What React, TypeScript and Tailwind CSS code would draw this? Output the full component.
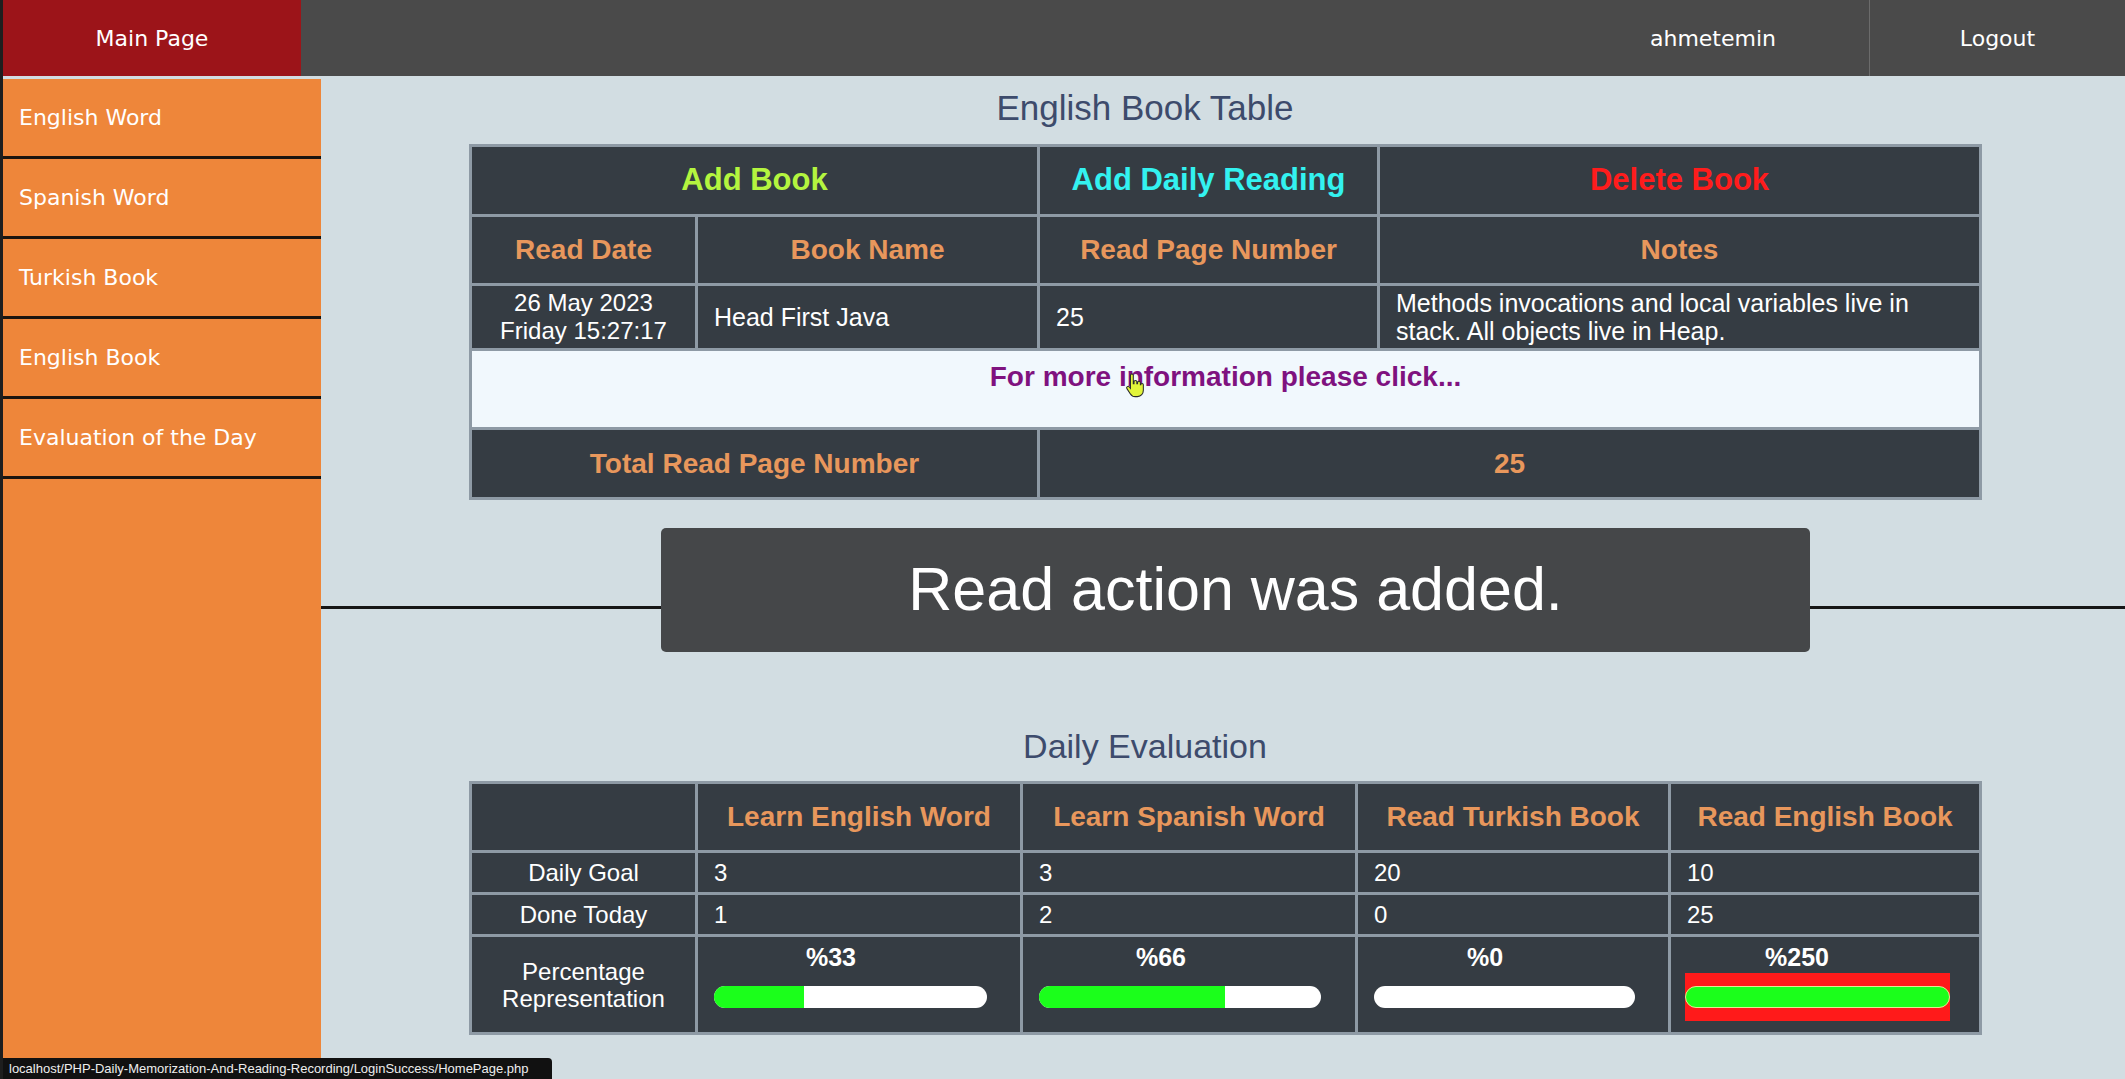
import React from "react";

type EvalCol = {
  title: string;
  goal: number;
  done: number;
};

const evalCols: EvalCol[] = [
  { title: "Learn English Word", goal: 3, done: 1 },
  { title: "Learn Spanish Word", goal: 3, done: 2 },
  { title: "Read Turkish Book", goal: 20, done: 0 },
  { title: "Read English Book", goal: 10, done: 25 },
];

const menu = ["English Word", "Spanish Word", "Turkish Book", "English Book", "Evaluation of the Day"];

const cell = "border-[3px] border-[#8e9aa5] bg-[#353c43]";
const head = "text-[28px] font-bold text-[#e8975c] text-center";

const HandCursor = () => (
  <svg width="22" height="26" viewBox="0 0 18 22" className="absolute left-[651px] top-[22px]">
    <path
      d="M6 2a1.2 1.2 0 0 1 2.4 0v7h.6V7.5a1.2 1.2 0 0 1 2.4 0V9h.6V8.2a1.2 1.2 0 0 1 2.4 0V10h.3a1.1 1.1 0 0 1 2.2 0v4.5c0 3-2 5.5-5 5.5H10c-2 0-3.2-1-4.2-2.5L3 13.2a1.2 1.2 0 0 1 2-1.4L6 13Z"
      fill="#e2f53a"
      stroke="#2b2b2b"
      strokeWidth="0.9"
    />
  </svg>
);

const Bar = ({ pct }: { pct: number }) => {
  const w = Math.min(pct, 100);
  if (pct > 100) {
    return (
      <div className="-ml-[2px] w-[96%] -my-[13px] py-[13px] bg-[#ff1a1a]">
        <div className="h-[22px] w-full rounded-full bg-[#1bff1b] border border-[#e8e890]" />
      </div>
    );
  }
  return (
    <div className="w-[94%]">
      <div className="h-[22px] w-full rounded-full bg-white overflow-hidden">
        <div className="h-full bg-[#1bff1b]" style={{ width: `${w}%` }} />
      </div>
    </div>
  );
};

export default function App() {
  return (
    <div className="relative flex h-[1079px] w-[2125px] flex-col overflow-hidden border-l-[3px] border-[#1e1e1e] bg-[#d2dde2]">
      <header className="flex h-[76px] items-stretch bg-[#4a4a4a] font-['DejaVu_Sans',sans-serif] text-[22px] text-white">
        <div className="flex w-[298px] items-center justify-center bg-[#9c1419]">Main Page</div>
        <div className="flex-1" />
        <div className="flex w-[312px] items-center justify-center">ahmetemin</div>
        <div className="flex w-[256px] items-center justify-center border-l border-[#6b6b6b]">Logout</div>
      </header>

      <div className="flex flex-1">
        <nav className="mt-[3px] w-[318px] bg-[#ee863a] font-['DejaVu_Sans',sans-serif] text-[22px] text-white">
          {menu.map((m) => (
            <div key={m} className="flex h-[80px] items-center border-b-[3px] border-[#1b1510] pl-4">
              {m}
            </div>
          ))}
        </nav>

        <main className="relative flex flex-1 flex-col items-start font-['Liberation_Sans',Arial,sans-serif]">
          <h1 className="mt-[12px] w-full pr-[156px] text-center text-[35px] leading-[40px] text-[#3d4b6c]">
            English Book Table
          </h1>

          <table className="ml-[148px] mt-[16px] w-[1513px] table-fixed border-collapse border-[3px] border-[#8e9aa5]">
            <colgroup>
              <col className="w-[226px]" />
              <col className="w-[342px]" />
              <col className="w-[340px]" />
              <col />
            </colgroup>
            <tbody>
              <tr className="h-[70px]">
                <td colSpan={2} className={`${cell} text-center text-[31px] font-bold text-[#b4f53f]`}>
                  Add Book
                </td>
                <td className={`${cell} text-center text-[31px] font-bold text-[#33f2f0]`}>Add Daily Reading</td>
                <td className={`${cell} text-center text-[31px] font-bold text-[#ff1c1c]`}>Delete Book</td>
              </tr>
              <tr className="h-[69px]">
                <td className={`${cell} ${head}`}>Read Date</td>
                <td className={`${cell} ${head}`}>Book Name</td>
                <td className={`${cell} ${head}`}>Read Page Number</td>
                <td className={`${cell} ${head}`}>Notes</td>
              </tr>
              <tr className="h-[65px] text-[25px] leading-[28px] text-white">
                <td className={`${cell} text-center text-[24px]`}>
                  26 May 2023
                  <br />
                  Friday 15:27:17
                </td>
                <td className={`${cell} px-4`}>Head First Java</td>
                <td className={`${cell} px-4`}>25</td>
                <td className={`${cell} px-4`}>Methods invocations and local variables live in stack. All objects live in Heap.</td>
              </tr>
              <tr className="h-[79px]">
                <td colSpan={4} className="relative border-[3px] border-[#8e9aa5] bg-[#f1f8fd] pt-[10px] align-top text-center text-[28px] font-bold leading-[32px] text-[#7f127f]">
                  For more information please click...
                  <HandCursor />
                </td>
              </tr>
              <tr className="h-[70px]">
                <td colSpan={2} className={`${cell} ${head}`}>
                  Total Read Page Number
                </td>
                <td colSpan={2} className={`${cell} ${head}`}>
                  25
                </td>
              </tr>
            </tbody>
          </table>

          <div className="mt-[106px] w-full border-t-[3px] border-[#161616]" />

          <div className="absolute left-[340px] top-[452px] flex h-[124px] w-[1149px] items-center justify-center rounded-[5px] bg-[#454749] text-[61px] text-white">
            Read action was added.
          </div>

          <h2 className="mt-[117px] w-full pr-[156px] text-center text-[34px] leading-[40px] text-[#3d4b6c]">
            Daily Evaluation
          </h2>

          <table className="ml-[148px] mt-[15px] w-[1513px] table-fixed border-collapse border-[3px] border-[#8e9aa5] text-white">
            <colgroup>
              <col className="w-[226px]" />
              <col className="w-[325px]" />
              <col className="w-[335px]" />
              <col className="w-[313px]" />
              <col />
            </colgroup>
            <tbody>
              <tr className="h-[69px]">
                <td className={cell} />
                {evalCols.map((c) => (
                  <td key={c.title} className={`${cell} ${head}`}>
                    {c.title}
                  </td>
                ))}
              </tr>
              <tr className="h-[42px] text-[24px]">
                <td className={`${cell} text-center`}>Daily Goal</td>
                {evalCols.map((c) => (
                  <td key={c.title} className={`${cell} px-4`}>
                    {c.goal}
                  </td>
                ))}
              </tr>
              <tr className="h-[42px] text-[24px]">
                <td className={`${cell} text-center`}>Done Today</td>
                {evalCols.map((c) => (
                  <td key={c.title} className={`${cell} px-4`}>
                    {c.done}
                  </td>
                ))}
              </tr>
              <tr className="h-[98px]">
                <td className={`${cell} text-center text-[24px] leading-[27px]`}>
                  Percentage
                  <br />
                  Representation
                </td>
                {evalCols.map((c) => {
                  const pct = Math.floor((c.done / c.goal) * 100);
                  return (
                    <td key={c.title} className={`${cell} px-4 pb-[20px] pt-[5px] align-top`}>
                      <div className="pr-[56px] text-center text-[25px] font-bold leading-[30px]">%{pct}</div>
                      <div className="mt-[14px]">
                        <Bar pct={pct} />
                      </div>
                    </td>
                  );
                })}
              </tr>
            </tbody>
          </table>
        </main>
      </div>

      <div className="absolute bottom-0 left-0 flex h-[21px] w-[549px] items-center whitespace-nowrap rounded-tr-[4px] bg-[#111111] pl-[6px] font-['Liberation_Sans',Arial,sans-serif] text-[13px] text-[#eeeeee]">
        localhost/PHP-Daily-Memorization-And-Reading-Recording/LoginSuccess/HomePage.php
      </div>
    </div>
  );
}
